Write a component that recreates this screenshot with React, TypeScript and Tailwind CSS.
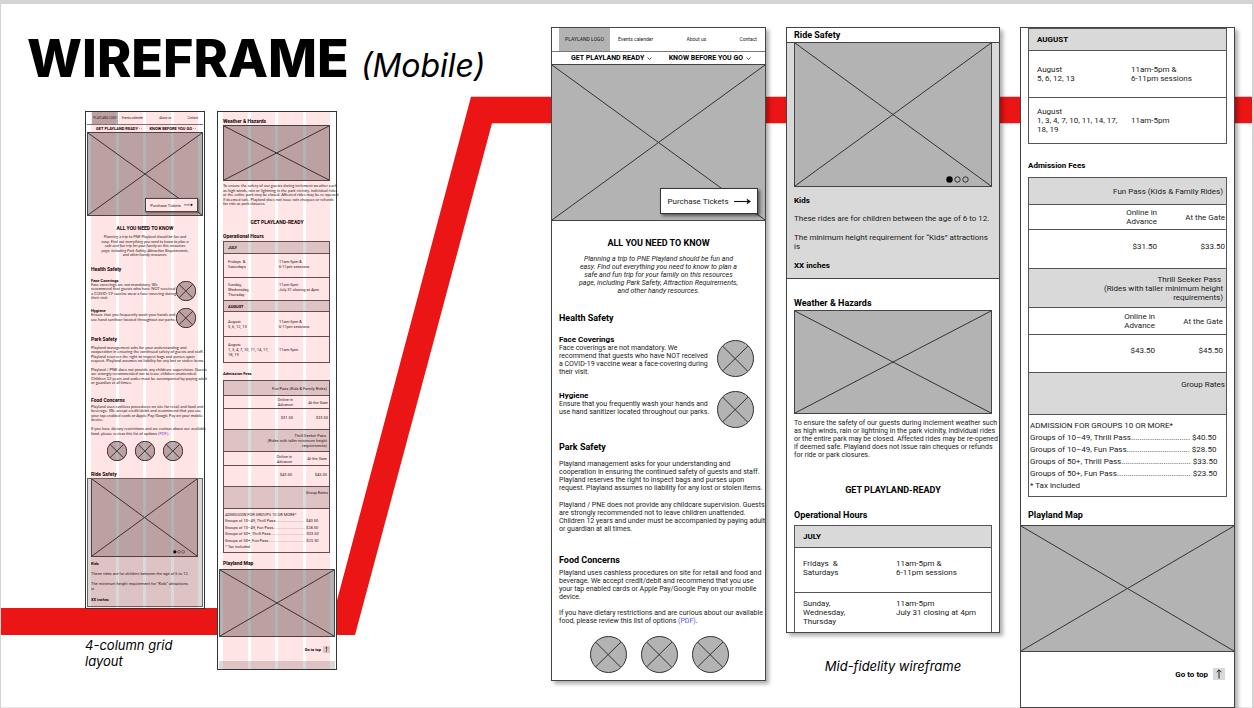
import React from "react";

type Size = "full" | "mini";
type BoxProps = { className?: string; children?: React.ReactNode };

/* ---------- copy shared by the full frames and their thumbnails ---------- */

const INTRO = [
  "Planning a trip to PNE Playland should be fun and",
  "easy. Find out everything you need to know to plan a",
  "safe and fun trip for your family on this resources",
  "page, including Park Safety, Attraction Requirements,",
  "and other handy resources.",
];
const FACE = [
  "Face coverings are not mandatory. We",
  "recommend that guests who have NOT received",
  "a COVID-19 vaccine wear a face-covering during",
  "their visit.",
];
const HYGIENE = ["Ensure that you frequently wash your hands and", "use hand sanitizer located throughout our parks."];
const PARK = [
  "Playland management asks for your understanding and",
  "cooperation in ensuring the continued safety of guests and staff.",
  "Playland reserves the right to inspect bags and purses upon",
  "request. Playland assumes no liability for any lost or stolen items.",
];
const CHILDREN = [
  "Playland / PNE does not provide any childcare supervision. Guests",
  "are strongly recommended not to leave children unattended.",
  "Children 12 years and under must be accompanied by paying adult",
  "or guardian at all times.",
];
const FOOD = [
  "Playland uses cashless procedures on site for retail and food and",
  "beverage. We accept credit/debit and recommend that you use",
  "your tap enabled cards or Apple Pay/Google Pay on your mobile",
  "device.",
];
const DIET: React.ReactNode[] = [
  "If you have dietary restrictions and are curious about our available",
  <>
    food, please review this list of options{" "}
    <a href="#menu" className="text-[#5a50f0]">
      (PDF)
    </a>
    .
  </>,
];
const WEATHER = [
  "To ensure the safety of our guests during inclement weather such",
  "as high winds, rain or lightning in the park vicinity, individual rides",
  "or the entire park may be closed. Affected rides may be re-opened",
  "if deemed safe. Playland does not issue rain cheques or refunds",
  "for ride or park closures.",
];
const GROUPS = [
  "ADMISSION FOR GROUPS 10 OR MORE*",
  "Groups of 10–49, Thrill Pass............................ $40.50",
  "Groups of 10–49, Fun Pass.............................. $28.50",
  "Groups of 50+, Thrill Pass................................. $33.50",
  "Groups of 50+, Fun Pass................................... $23.50",
  "* Tax included",
];

/* ------------------------------ primitives ------------------------------ */

function Lines({ lines, className = "" }: { lines: React.ReactNode[]; className?: string }) {
  return (
    <p className={`flex flex-col justify-between whitespace-nowrap ${className}`}>
      {lines.map((line, i) => (
        <span key={i}>{line}</span>
      ))}
    </p>
  );
}

function Cross() {
  return (
    <svg className="absolute inset-0 h-full w-full" viewBox="0 0 100 100" preserveAspectRatio="none" aria-hidden="true">
      <path d="M0 0L100 100M100 0L0 100" fill="none" stroke="#333" strokeWidth="1" vectorEffect="non-scaling-stroke" />
    </svg>
  );
}

function Placeholder({ className = "", children }: BoxProps) {
  return (
    <div className={`relative border-[#444] bg-[#b3b3b3] ${className}`}>
      <Cross />
      {children}
    </div>
  );
}

function Round({ className = "" }: { className?: string }) {
  return (
    <svg className={`shrink-0 ${className}`} viewBox="0 0 37 37" aria-hidden="true">
      <circle cx="18.5" cy="18.5" r="18" fill="#b3b3b3" stroke="#333" vectorEffect="non-scaling-stroke" />
      <path d="M5.5 6L30.5 31M31 6L5.5 31" fill="none" stroke="#333" vectorEffect="non-scaling-stroke" />
    </svg>
  );
}

function Chevron({ className = "" }: { className?: string }) {
  return (
    <svg className={className} viewBox="0 0 10 6" aria-hidden="true">
      <path d="M1 1L5 5L9 1" fill="none" stroke="#222" strokeWidth="1.6" />
    </svg>
  );
}

function ArrowRight({ className = "" }: { className?: string }) {
  return (
    <svg className={className} viewBox="0 0 17 7" aria-hidden="true">
      <path d="M0 3.5H15" stroke="#111" strokeWidth="1.1" />
      <path d="M12.5 0.5L17 3.5L12.5 6.5L13.6 3.5Z" fill="#111" />
    </svg>
  );
}

function ArrowUp({ className = "" }: { className?: string }) {
  return (
    <svg className={className} viewBox="0 0 12 12" aria-hidden="true">
      <path d="M6 10.5V2M3.6 4.2L6 1.8L8.4 4.2" fill="none" stroke="#222" strokeWidth="1" />
    </svg>
  );
}

function Dots({ className = "" }: { className?: string }) {
  return (
    <svg className={className} viewBox="0 0 23 7" aria-hidden="true">
      <circle cx="3.5" cy="3.5" r="3.2" fill="#000" />
      <circle cx="11.5" cy="3.5" r="2.7" fill="none" stroke="#222" strokeWidth="0.9" />
      <circle cx="19.5" cy="3.5" r="2.7" fill="none" stroke="#222" strokeWidth="0.9" />
    </svg>
  );
}

function FullFrame({ children, className = "" }: BoxProps) {
  return (
    <section
      className={`border border-[#444] bg-white text-[8px] leading-[9px] text-[#1a1a1a] shadow-[3px_3px_4px_rgba(0,0,0,0.32)] font-[Roboto,sans-serif] ${className}`}
    >
      {children}
    </section>
  );
}

function MiniFrame({ children, className = "" }: BoxProps) {
  return (
    <section
      className={`relative border border-[#333] bg-white px-px text-[4px] leading-[5px] text-[#1a1a1a] font-[Roboto,sans-serif] ${className}`}
    >
      {children}
      <div className="pointer-events-none absolute inset-y-0 left-[5px] right-[6px] grid grid-cols-4 gap-[3px]" aria-hidden="true">
        <div className="bg-[#ff0000]/10" />
        <div className="bg-[#ff0000]/10" />
        <div className="bg-[#ff0000]/10" />
        <div className="bg-[#ff0000]/10" />
      </div>
    </section>
  );
}

/* -------------------------------- tables -------------------------------- */

type HourRow = { days: string[]; hours: string[]; h: string };

function HoursRows({ month, head, rows, size }: { month: string; head: string; rows: HourRow[]; size: Size }) {
  const pad = size === "full" ? "pl-[8px]" : "pl-[4px]";
  return (
    <tbody>
      <tr>
        <th colSpan={2} className={`border-b border-[#555] bg-[#d9d9d9] text-left font-bold text-black ${pad} ${head}`}>
          {month}
        </th>
      </tr>
      {rows.map((row) => (
        <tr key={row.days.join()}>
          <td className={`border-b border-[#555] ${pad} ${row.h}`}>
            <Lines lines={row.days} />
          </td>
          <td className={`border-b border-[#555] ${row.h}`}>
            <Lines lines={row.hours} />
          </td>
        </tr>
      ))}
    </tbody>
  );
}

type FeeStyle = {
  table: string;
  col1: string;
  col2: string;
  fun: string;
  sub1: string;
  price1: string;
  thrill: string;
  sub2: string;
  price2: string;
  group: string;
  listCell: string;
  list: string;
  mid1: string;
  end1: string;
  mid2: string;
  end2: string;
};

const FULL_FEES: FeeStyle = {
  table: "ml-[7px] mr-[7px] mt-[7px]",
  col1: "w-[60px]",
  col2: "w-[71px]",
  fun: "h-[27px] pr-[3px]",
  sub1: "h-[25px]",
  price1: "h-[39px] pb-[6px]",
  thrill: "h-[39px] pr-[3px]",
  sub2: "h-[27px]",
  price2: "h-[38px] pb-[6px]",
  group: "h-[42px] pb-[18px] pr-px",
  listCell: "h-[82px] pl-px",
  list: "h-[72px] leading-[12px]",
  mid1: "pr-[3px]",
  end1: "pr-px",
  mid2: "pr-[5px]",
  end2: "pr-[3px]",
};

const MINI_FEES: FeeStyle = {
  table: "ml-[4px] mr-[5px] mt-[4px]",
  col1: "w-[32px]",
  col2: "w-[39px]",
  fun: "h-[15px] pr-[2px]",
  sub1: "h-[13px]",
  price1: "h-[21px] pb-[3px]",
  thrill: "h-[22px] pr-[2px]",
  sub2: "h-[14px]",
  price2: "h-[21px] pb-[3px]",
  group: "h-[22px] pb-[11px] pr-px",
  listCell: "h-[44px] pl-px",
  list: "h-[38px]",
  mid1: "pr-[2px]",
  end1: "pr-px",
  mid2: "pr-[3px]",
  end2: "pr-[2px]",
};

function FeesTable({ s }: { s: FeeStyle }) {
  const line = "border-b border-[#555]";
  return (
    <div className={`border-x border-t border-[#555] ${s.table}`}>
      <table className="w-full table-fixed border-separate border-spacing-0 text-right">
        <colgroup>
          <col className={s.col1} />
          <col className={s.col2} />
          <col />
        </colgroup>
        <tbody>
          <tr>
            <th colSpan={3} className={`bg-[#d9d9d9] font-normal ${line} ${s.fun}`}>
              Fun Pass (Kids &amp; Family Rides)
            </th>
          </tr>
          <tr>
            <td className={line} />
            <td className={`${line} ${s.sub1} ${s.mid1}`}>
              <Lines lines={["Online in", "Advance"]} />
            </td>
            <td className={`whitespace-nowrap ${line} ${s.end1}`}>At the Gate</td>
          </tr>
          <tr>
            <td className={line} />
            <td className={`${line} ${s.price1} ${s.mid1}`}>$31.50</td>
            <td className={`${line} ${s.price1} ${s.end1}`}>$33.50</td>
          </tr>
          <tr>
            <th colSpan={3} className={`bg-[#d9d9d9] font-normal ${line} ${s.thrill}`}>
              <Lines lines={["Thrill Seeker Pass\u00a0", "(Rides with taller minimum height", "requirements)"]} />
            </th>
          </tr>
          <tr>
            <td className={line} />
            <td className={`${line} ${s.sub2} ${s.mid2}`}>
              <Lines lines={["Online in", "Advance"]} />
            </td>
            <td className={`whitespace-nowrap ${line} ${s.end2}`}>At the Gate</td>
          </tr>
          <tr>
            <td className={line} />
            <td className={`${line} ${s.price2} ${s.mid2}`}>$43.50</td>
            <td className={`${line} ${s.price2} ${s.end2}`}>$45.50</td>
          </tr>
          <tr>
            <th colSpan={3} className={`bg-[#d9d9d9] font-normal ${line} ${s.group}`}>
              Group Rates
            </th>
          </tr>
          <tr>
            <td colSpan={3} className={`text-left ${line} ${s.listCell}`}>
              <Lines lines={GROUPS} className={s.list} />
            </td>
          </tr>
        </tbody>
      </table>
    </div>
  );
}

/* ------------------------------ thumbnails ------------------------------ */

const MINI_HEAD = "text-[5px] leading-[6px] font-bold text-black";
const MINI_BODY = "leading-[4px] font-['Liberation_Sans_Narrow',Lato,sans-serif]";

function MiniHome() {
  return (
    <MiniFrame className="pb-px">
      <nav className="flex h-[13px] items-stretch border-b border-[#777] pl-[5px] text-[3px]">
        <div className="flex w-[26px] items-center justify-center bg-[#b3b3b3]">PLAYLAND LOGO</div>
        <div className="flex flex-1 items-center justify-between pl-[4px] pr-[5px]">
          <a href="#events">Events calender</a>
          <a href="#about">About us</a>
          <a href="#contact">Contact</a>
        </div>
      </nav>
      <div className="flex h-[7px] items-center justify-between pl-[9px] pr-[7px] leading-[4px] text-black">
        <button className="flex items-center gap-px font-bold">
          GET PLAYLAND READY <Chevron className="w-[3px]" />
        </button>
        <button className="flex items-center gap-px font-bold">
          KNOW BEFORE YOU GO <Chevron className="w-[3px]" />
        </button>
      </div>
      <Placeholder className="h-[84px] border">
        <button className="absolute bottom-[3px] right-[4px] flex h-[14px] w-[53px] items-center justify-center gap-[3px] border border-[#444] bg-white shadow-[1px_1px_2px_rgba(0,0,0,0.5)]">
          Purchase Tickets <ArrowRight className="w-[9px]" />
        </button>
      </Placeholder>
      <h2 className={`mt-[9px] text-center ${MINI_HEAD}`}>ALL YOU NEED TO KNOW</h2>
      <Lines lines={INTRO} className={`mt-[4px] h-[22px] items-center italic ${MINI_BODY}`} />
      <div className="pl-[4px]">
        <h3 className={`mt-[9px] ${MINI_HEAD}`}>Health Safety</h3>
        <div className="mt-[7px] flex justify-between pr-[7px]">
          <div>
            <h4 className="font-bold leading-[4px] text-black">Face Coverings</h4>
            <Lines lines={FACE} className={`h-[17px] ${MINI_BODY}`} />
          </div>
          <Round className="mt-[2px] size-[20px]" />
        </div>
        <div className="mt-[7px] flex justify-between pr-[7px]">
          <div className="pt-px">
            <h4 className="font-bold leading-[4px] text-black">Hygiene</h4>
            <Lines lines={HYGIENE} className={`h-[9px] ${MINI_BODY}`} />
          </div>
          <Round className="size-[20px]" />
        </div>
        <h3 className={`mt-[8px] ${MINI_HEAD}`}>Park Safety</h3>
        <Lines lines={PARK} className={`mt-[4px] h-[17px] ${MINI_BODY}`} />
        <Lines lines={CHILDREN} className={`mt-[5px] h-[17px] ${MINI_BODY}`} />
        <h3 className={`mt-[12px] ${MINI_HEAD}`}>Food Concerns</h3>
        <Lines lines={FOOD} className={`mt-[2px] h-[17px] ${MINI_BODY}`} />
        <Lines lines={DIET} className={`mt-[5px] h-[9px] ${MINI_BODY}`} />
        <div className="mt-[5px] flex gap-[8px] pl-[16px]">
          <Round className="size-[20px]" />
          <Round className="size-[20px]" />
          <Round className="size-[20px]" />
        </div>
        <h3 className={`mt-[10px] ${MINI_HEAD}`}>Ride Safety</h3>
      </div>
      <div className="mt-px border border-[#666] bg-[#d9d9d9] pb-[4px] pl-[3px] pr-[4px]">
        <Placeholder className="h-[78px] border-x border-b">
          <Dots className="absolute bottom-[2px] right-[12px] w-[12px]" />
        </Placeholder>
        <h4 className="mt-[4px] font-bold text-black">Kids</h4>
        <Lines className="mt-[5px]" lines={["These rides are for children between the age of 6 to 12."]} />
        <Lines className="mt-[5px]" lines={["The minimum height requirement for “Kids” attractions", "is"]} />
        <h4 className="mt-[6px] font-bold text-black">XX inches</h4>
      </div>
    </MiniFrame>
  );
}

function MiniVisit() {
  return (
    <MiniFrame>
      <h3 className={`mt-[6px] pl-[4px] ${MINI_HEAD}`}>Weather &amp; Hazards</h3>
      <Placeholder className="ml-[4px] mr-[5px] mt-px h-[56px] border" />
      <Lines lines={WEATHER} className={`mt-[3px] h-[22px] pl-[4px] ${MINI_BODY}`} />
      <h2 className={`mt-[13px] text-center ${MINI_HEAD}`}>GET PLAYLAND-READY</h2>
      <h3 className={`mt-[8px] pl-[4px] ${MINI_HEAD}`}>Operational Hours</h3>
      <div className="ml-[4px] mr-[5px] mt-[2px] border-x border-t border-[#555]">
        <table className="w-full table-fixed border-separate border-spacing-0">
          <colgroup>
            <col className="w-[55px]" />
            <col />
          </colgroup>
          <HoursRows
            size="mini"
            month="JULY"
            head="h-[12px]"
            rows={[
              { days: ["Fridays \u00a0&", "Saturdays"], hours: ["11am-5pm &", "6-11pm sessions"], h: "h-[24px] pb-[4px]" },
              { days: ["Sunday,", "Wednesday,", "Thursday"], hours: ["11am-5pm", "July 31 closing at 4pm", "\u00a0"], h: "h-[23px]" },
            ]}
          />
          <HoursRows
            size="mini"
            month="AUGUST"
            head="h-[11px]"
            rows={[
              { days: ["August", "5, 6, 12, 13"], hours: ["11am-5pm &", "6-11pm sessions"], h: "h-[25px]" },
              { days: ["August", "1, 3, 4, 7, 10, 11, 14, 17,", "18, 19"], hours: ["11am-5pm"], h: "h-[26px]" },
            ]}
          />
        </table>
      </div>
      <h4 className="mt-[8px] pl-[4px] font-bold text-black">Admission Fees</h4>
      <FeesTable s={MINI_FEES} />
      <h3 className={`mt-[7px] pl-[4px] ${MINI_HEAD}`}>Playland Map</h3>
      <Placeholder className="mt-[3px] h-[68px] border" />
      <a href="#top" className="mt-[9px] flex items-center justify-end gap-[2px] pr-[5px] font-bold text-black">
        Go to top <ArrowUp className="size-[7px] bg-[#d9d9d9]" />
      </a>
      <div className="mt-[8px] h-[8px] bg-[#d9d9d9]" />
    </MiniFrame>
  );
}

/* ------------------------------ full frames ------------------------------ */

const HEAD = "text-[9px] leading-[10px] font-bold text-black";
const BODY = "text-[7px] leading-[8px]";

function Home() {
  return (
    <FullFrame className="pb-[7px]">
      <nav className="flex h-[24px] items-stretch border-b border-[#777] pl-[7px] text-[5px]">
        <div className="flex w-[51px] items-center justify-center bg-[#b3b3b3]">PLAYLAND LOGO</div>
        <div className="flex flex-1 items-center justify-between px-[8px]">
          <a href="#events">Events calender</a>
          <a href="#about">About us</a>
          <a href="#contact">Contact</a>
        </div>
      </nav>
      <div className="flex h-[12px] items-center justify-between pl-[19px] pr-[14px] text-[7px] leading-[8px] text-black">
        <button className="flex items-center gap-[3px] font-bold">
          GET PLAYLAND READY <Chevron className="w-[5px]" />
        </button>
        <button className="flex items-center gap-[3px] font-bold">
          KNOW BEFORE YOU GO <Chevron className="w-[5px]" />
        </button>
      </div>
      <Placeholder className="h-[157px] border-y">
        <button className="absolute bottom-[6px] right-[7px] flex h-[26px] w-[98px] items-center justify-center gap-[5px] border border-[#333] bg-white shadow-[2px_2px_3px_rgba(0,0,0,0.5)]">
          Purchase Tickets <ArrowRight className="w-[17px]" />
        </button>
      </Placeholder>
      <h2 className={`mt-[17px] text-center ${HEAD}`}>ALL YOU NEED TO KNOW</h2>
      <Lines lines={INTRO} className={`mt-[7px] items-center italic ${BODY}`} />
      <div className="pl-[7px]">
        <h3 className={`mt-[18px] ${HEAD}`}>Health Safety</h3>
        <div className="mt-[13px] flex justify-between pr-[11px]">
          <div>
            <h4 className="text-[8px] font-bold leading-[8px] text-black">Face Coverings</h4>
            <Lines lines={FACE} className={BODY} />
          </div>
          <Round className="mt-[4px] size-[37px]" />
        </div>
        <div className="mt-[14px] flex justify-between pr-[11px]">
          <div className="pt-px">
            <h4 className="text-[8px] font-bold leading-[8px] text-black">Hygiene</h4>
            <Lines lines={HYGIENE} className={BODY} />
          </div>
          <Round className="size-[37px]" />
        </div>
        <h3 className={`mt-[14px] ${HEAD}`}>Park Safety</h3>
        <Lines lines={PARK} className={`mt-[8px] ${BODY}`} />
        <Lines lines={CHILDREN} className={`mt-[9px] ${BODY}`} />
        <h3 className={`mt-[22px] ${HEAD}`}>Food Concerns</h3>
        <Lines lines={FOOD} className={`mt-[4px] ${BODY}`} />
        <Lines lines={DIET} className={`mt-[8px] ${BODY}`} />
        <div className="mt-[11px] flex gap-[14px] pl-[31px]">
          <Round className="size-[37px]" />
          <Round className="size-[37px]" />
          <Round className="size-[37px]" />
        </div>
      </div>
    </FullFrame>
  );
}

function Rides() {
  return (
    <FullFrame>
      <h3 className={`flex h-[14px] items-center pl-[7px] ${HEAD}`}>Ride Safety</h3>
      <div className="border-y border-[#444] bg-[#d9d9d9] px-[7px] pb-[8px]">
        <Placeholder className="h-[144px] border-x border-b">
          <Dots className="absolute bottom-[3px] right-[22px] w-[23px]" />
        </Placeholder>
        <h4 className="mt-[9px] font-bold text-black">Kids</h4>
        <Lines className="mt-[9px]" lines={["These rides are for children between the age of 6 to 12."]} />
        <Lines className="mt-[10px]" lines={["The minimum height requirement for “Kids” attractions", "is"]} />
        <h4 className="mt-[10px] font-bold text-black">XX inches</h4>
      </div>
      <div className="px-[7px]">
        <h3 className={`mt-[19px] ${HEAD}`}>Weather &amp; Hazards</h3>
        <Placeholder className="mt-[2px] h-[104px] border" />
        <Lines lines={WEATHER} className={`mt-[5px] ${BODY}`} />
        <h2 className={`mt-[26px] text-center ${HEAD}`}>GET PLAYLAND-READY</h2>
        <h3 className={`mt-[15px] ${HEAD}`}>Operational Hours</h3>
        <div className="mt-[5px] border-x border-t border-[#555]">
          <table className="w-full table-fixed border-separate border-spacing-0">
            <colgroup>
              <col className="w-[101px]" />
              <col />
            </colgroup>
            <tbody>
              <tr>
                <th colSpan={2} className="h-[22px] border-b border-[#555] bg-[#d9d9d9] pl-[8px] text-left font-bold text-black">
                  JULY
                </th>
              </tr>
              <tr>
                <td className="h-[45px] border-b border-[#555] pb-[4px] pl-[8px]">
                  <Lines lines={["Fridays \u00a0&", "Saturdays"]} />
                </td>
                <td className="h-[45px] border-b border-[#555] pb-[4px]">
                  <Lines lines={["11am-5pm &", "6-11pm sessions"]} />
                </td>
              </tr>
              <tr>
                <td className="h-[39px] pl-[8px] pt-[6px] align-top">
                  <Lines lines={["Sunday,", "Wednesday,", "Thursday"]} />
                </td>
                <td className="h-[39px] pt-[6px] align-top">
                  <Lines lines={["11am-5pm", "July 31 closing at 4pm"]} />
                </td>
              </tr>
            </tbody>
          </table>
        </div>
      </div>
    </FullFrame>
  );
}

function Fees() {
  return (
    <FullFrame className="pb-[27px]">
      <div className="mx-[7px] border-x border-t border-[#555]">
        <table className="w-full table-fixed border-separate border-spacing-0">
          <colgroup>
            <col className="w-[102px]" />
            <col />
          </colgroup>
          <HoursRows
            size="full"
            month="AUGUST"
            head="h-[22px]"
            rows={[
              { days: ["August", "5, 6, 12, 13"], hours: ["11am-5pm &", "6-11pm sessions"], h: "h-[47px]" },
              { days: ["August", "1, 3, 4, 7, 10, 11, 14, 17,", "18, 19"], hours: ["11am-5pm"], h: "h-[46px]" },
            ]}
          />
        </table>
      </div>
      <h4 className="mt-[17px] pl-[7px] font-bold text-black">Admission Fees</h4>
      <FeesTable s={FULL_FEES} />
      <h3 className={`mt-[13px] pl-[7px] ${HEAD}`}>Playland Map</h3>
      <Placeholder className="mt-[5px] h-[127px] border-y" />
      <a href="#top" className="mt-[16px] flex items-center justify-end gap-[5px] pr-[9px] font-bold text-black">
        Go to top <ArrowUp className="size-[12px] bg-[#d9d9d9]" />
      </a>
    </FullFrame>
  );
}

/* --------------------------------- page --------------------------------- */

export default function App() {
  return (
    <div className="flex min-h-screen bg-[#d4d4d4] pl-px pr-[2px] pt-[4px] font-[Inter,sans-serif] text-black">
      <main className="relative grid w-full grid-cols-[minmax(0,550fr)_minmax(0,215fr)_minmax(0,20fr)_minmax(0,214fr)_minmax(0,20fr)_minmax(0,215fr)_minmax(0,17fr)] items-start bg-white shadow-[inset_0_-1px_#e8e8e8]">
        <svg
          className="absolute inset-0 h-full w-full"
          viewBox="1 4 1251 704"
          preserveAspectRatio="none"
          aria-hidden="true"
        >
          <path d="M1 608H335L471 96.7H1252V123.3H492L355 635H1Z" fill="#ec1515" />
        </svg>

        <div className="relative pt-[29px]">
          <h1 className="flex items-baseline gap-[12px] whitespace-nowrap pl-[26px] text-[52px] font-extrabold leading-[52px]">
            WIREFRAME <span className="text-[32px] font-normal italic leading-[32px]">(Mobile)</span>
          </h1>
          <div className="mt-[26px] grid grid-cols-[120px_120px] items-start gap-[12px] pl-[84px]">
            <figure>
              <MiniHome />
              <figcaption className="mt-[28px] text-[13px] italic leading-[16px]">
                4-column grid
                <br />
                layout
              </figcaption>
            </figure>
            <MiniVisit />
          </div>
        </div>

        <div className="relative col-start-2 mt-[23px]">
          <Home />
        </div>
        <figure className="relative col-start-4 mt-[23px]">
          <Rides />
          <figcaption className="mt-[25px] text-center text-[13px] italic leading-[16px]">Mid-fidelity wireframe</figcaption>
        </figure>
        <div className="relative col-start-6 mt-[23px]">
          <Fees />
        </div>
      </main>
    </div>
  );
}
